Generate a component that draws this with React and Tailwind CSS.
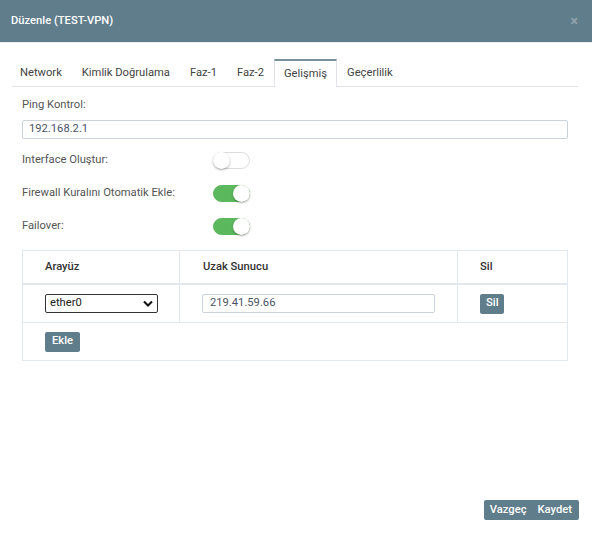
import React, { useState } from 'react'

const tabs = ['Network', 'Kimlik Doğrulama', 'Faz-1', 'Faz-2', 'Gelişmiş', 'Geçerlilik']

function Toggle({ on }) {
    return (
        <div
            className={`relative w-[37px] h-[17px] rounded-full border ${on ? 'bg-[#5cb85c] border-[#5cb85c]' : 'bg-white border-[#dcdcdc]'}`}
        >
            <div
                className={`absolute top-[-1px] w-[17px] h-[17px] rounded-full bg-white shadow-[0_1px_2px_rgba(0,0,0,0.35)] ${on ? 'right-[-1px]' : 'left-[-1px]'}`}
            />
        </div>
    )
}

export default function App() {
    const [active] = useState('Gelişmiş')

    return (
        <div className="w-[592px] h-[533px] bg-white flex flex-col font-['Roboto',sans-serif] text-[11.2px] text-[#555]">
            <div className="h-[43px] bg-[#607d8b] flex items-center justify-between pl-[11px] pr-[14px] border-b border-[#e8edf0]">
                <span className="text-white font-medium text-[11.2px]">Düzenle (TEST-VPN)</span>
                <span className="text-[#8fa3ad] text-[14px] font-bold leading-none">×</span>
            </div>

            <div className="pl-[12px] pr-[14px] pt-[16px] flex-1 flex flex-col">
                <div className="flex border-b border-[#e2e2ea] h-[28px]">
                    <div className="flex ml-[-2px]">
                        {tabs.map(t => (
                            <div
                                key={t}
                                className={`px-[9px] flex items-center text-[#444] ${t === active ? 'border-t-2 border-t-[#78909c] border-x border-x-[#e2e2ea] bg-white mb-[-1px]' : 'border-t-2 border-t-transparent border-x border-x-transparent'}`}
                            >
                                {t}
                            </div>
                        ))}
                    </div>
                </div>

                <div className="pl-[10px] pr-[10px] pt-[11px] flex flex-col">
                    <label className="h-[14px] leading-[14px]">Ping Kontrol:</label>
                    <div className="mt-[8px] h-[19px] border border-[#ccd3dc] rounded-[2px] px-[6px] flex items-center text-[#4a5568]">
                        192.168.2.1
                    </div>

                    <div className="mt-[13px] flex items-center h-[17px]">
                        <span className="w-[191px]">Interface Oluştur:</span>
                        <Toggle on={false} />
                    </div>
                    <div className="mt-[16px] flex items-center h-[17px]">
                        <span className="w-[191px]">Firewall Kuralını Otomatik Ekle:</span>
                        <Toggle on />
                    </div>
                    <div className="mt-[16px] flex items-center h-[17px]">
                        <span className="w-[191px]">Failover:</span>
                        <Toggle on />
                    </div>

                    <div className="mt-[15px] border border-[#e1e8ef]">
                        <div className="grid grid-cols-[157px_278px_1fr] h-[34px] border-b-2 border-[#e1e8ef] font-medium text-[#333]">
                            <div className="pl-[22px] flex items-center border-r border-[#e1e8ef]">Arayüz</div>
                            <div className="pl-[23px] flex items-center border-r border-[#e1e8ef]">Uzak Sunucu</div>
                            <div className="pl-[22px] flex items-center">Sil</div>
                        </div>
                        <div className="grid grid-cols-[157px_278px_1fr] h-[38px] border-b border-[#e1e8ef]">
                            <div className="pl-[22px] flex items-center border-r border-[#e1e8ef]">
                                <div className="w-[113px] h-[19px] border border-[#333] rounded-[2px] flex items-center justify-between px-[4px] text-[#222]">
                                    <span>ether0</span>
                                    <svg width="10" height="7" viewBox="0 0 10 7">
                                        <path d="M1 1.5 L5 5.5 L9 1.5" fill="none" stroke="#111" strokeWidth="2" />
                                    </svg>
                                </div>
                            </div>
                            <div className="pl-[22px] flex items-center border-r border-[#e1e8ef]">
                                <div className="w-[233px] h-[19px] border border-[#ccd3dc] rounded-[2px] flex items-center px-[7px] text-[#4a5568]">
                                    219.41.59.66
                                </div>
                            </div>
                            <div className="pl-[22px] flex items-center">
                                <button className="h-[20px] px-[6px] bg-[#607d8b] text-white rounded-[2px] font-medium">Sil</button>
                            </div>
                        </div>
                        <div className="h-[37px] pl-[22px] flex items-center">
                            <button className="h-[20px] px-[7px] bg-[#607d8b] text-white rounded-[2px] font-medium">Ekle</button>
                        </div>
                    </div>
                </div>

                <div className="flex-1" />
                <div className="flex justify-end pb-[13px] mr-[-1px]">
                    <div className="flex h-[20px] bg-[#607d8b] rounded-[2px] text-white font-medium">
                        <button className="pl-[6px] pr-[5px]">Vazgeç</button>
                        <button className="pl-[6px] pr-[7px]">Kaydet</button>
                    </div>
                </div>
            </div>
        </div>
    )
}
